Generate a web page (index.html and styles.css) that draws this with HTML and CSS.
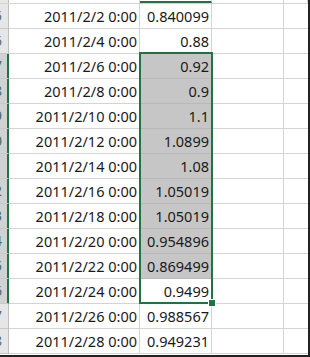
FILE: index.html
```html
<!DOCTYPE html>
<html lang="ja">
<head>
<meta charset="utf-8">
<title>Sheet</title>
<link rel="stylesheet" href="styles.css">
</head>
<body>
<div class="sheet">
  <div class="strip">
    <div class="strip-hdr"></div>
    <div class="strip-cell"></div>
    <div class="strip-cell strip-sel"></div>
    <div class="strip-cell"></div>
    <div class="strip-cell"></div>
  </div>
  <div class="grid">
    <div class="hdr"><span>45</span></div><div class="cell date">2011/2/2 0:00</div><div class="cell num">0.840099</div><div class="cell"></div><div class="cell"></div>
    <div class="hdr"><span>46</span></div><div class="cell date">2011/2/4 0:00</div><div class="cell num">0.88</div><div class="cell"></div><div class="cell"></div>
    <div class="hdr sel"><span>47</span></div><div class="cell date">2011/2/6 0:00</div><div class="cell num shade">0.92</div><div class="cell"></div><div class="cell"></div>
    <div class="hdr sel"><span>48</span></div><div class="cell date">2011/2/8 0:00</div><div class="cell num shade">0.9</div><div class="cell"></div><div class="cell"></div>
    <div class="hdr sel"><span>49</span></div><div class="cell date">2011/2/10 0:00</div><div class="cell num shade">1.1</div><div class="cell"></div><div class="cell"></div>
    <div class="hdr sel"><span>50</span></div><div class="cell date">2011/2/12 0:00</div><div class="cell num shade">1.0899</div><div class="cell"></div><div class="cell"></div>
    <div class="hdr sel"><span>51</span></div><div class="cell date">2011/2/14 0:00</div><div class="cell num shade">1.08</div><div class="cell"></div><div class="cell"></div>
    <div class="hdr sel"><span>52</span></div><div class="cell date">2011/2/16 0:00</div><div class="cell num shade">1.05019</div><div class="cell"></div><div class="cell"></div>
    <div class="hdr sel"><span>53</span></div><div class="cell date">2011/2/18 0:00</div><div class="cell num shade">1.05019</div><div class="cell"></div><div class="cell"></div>
    <div class="hdr sel"><span>54</span></div><div class="cell date">2011/2/20 0:00</div><div class="cell num shade">0.954896</div><div class="cell"></div><div class="cell"></div>
    <div class="hdr sel"><span>55</span></div><div class="cell date">2011/2/22 0:00</div><div class="cell num shade">0.869499</div><div class="cell"></div><div class="cell"></div>
    <div class="hdr sel"><span>56</span></div><div class="cell date">2011/2/24 0:00</div><div class="cell num">0.9499</div><div class="cell"></div><div class="cell"></div>
    <div class="hdr"><span>57</span></div><div class="cell date">2011/2/26 0:00</div><div class="cell num">0.988567</div><div class="cell"></div><div class="cell"></div>
    <div class="hdr"><span>58</span></div><div class="cell date">2011/2/28 0:00</div><div class="cell num">0.949231</div><div class="cell"></div><div class="cell"></div>
  </div>
  <div class="selection"></div>
  <div class="handle"></div>
</div>
</body>
</html>
```
FILE: styles.css
```css
html, body {
  margin: 0;
  padding: 0;
  background: #ffffff;
}

.sheet {
  position: relative;
  width: 310px;
  height: 357px;
  box-sizing: border-box;
  border-right: 2px solid #222222;
  border-bottom: 2px solid #222222;
  overflow: hidden;
  font-family: "Noto Sans", "Noto Sans CJK JP", sans-serif;
  font-size: 14.5px;
  color: #1a1a1a;
  background: #ffffff;
}

.strip,
.grid {
  display: grid;
  grid-template-columns: 9px 131px 72px 72px 24px;
}

.strip {
  height: 3px;
}

.strip-hdr {
  background: #e6e6e6;
  border-right: 1px solid #bdbdbd;
}

.strip-cell {
  border-right: 1px solid #d4d4d4;
}

.strip-sel {
  border-bottom: 2px solid #217346;
  height: 1px;
}

.grid {
  grid-auto-rows: 25px;
  border-top: 1px solid #d4d4d4;
}

.hdr {
  background: #e6e6e6;
  border-right: 1px solid #bdbdbd;
  border-bottom: 1px solid #c8c8c8;
  display: flex;
  justify-content: flex-end;
  align-items: center;
  overflow: hidden;
  font-size: 14px;
  color: #666666;
}

.hdr span {
  margin-right: 6px;
  line-height: 24px;
}

.hdr.sel {
  background: #d2d2d2;
  border-right-color: #217346;
  box-shadow: inset -1px 0 0 #217346;
  color: #4a6a58;
}

.cell {
  border-right: 1px solid #d4d4d4;
  border-bottom: 1px solid #d4d4d4;
  line-height: 25px;
  white-space: nowrap;
  overflow: hidden;
}

.cell:nth-child(5n) {
  border-right: none;
}

.date,
.num {
  text-align: right;
  padding-right: 2px;
}

.shade {
  background: #c6c6c6;
  border-bottom-color: #b8b8b8;
}

.selection {
  position: absolute;
  left: 139px;
  top: 52px;
  width: 74px;
  height: 252px;
  box-sizing: border-box;
  border: 2px solid #217346;
  pointer-events: none;
}

.handle {
  position: absolute;
  left: 208px;
  top: 299px;
  width: 6px;
  height: 6px;
  background: #217346;
  border: 1px solid #ffffff;
}
```
